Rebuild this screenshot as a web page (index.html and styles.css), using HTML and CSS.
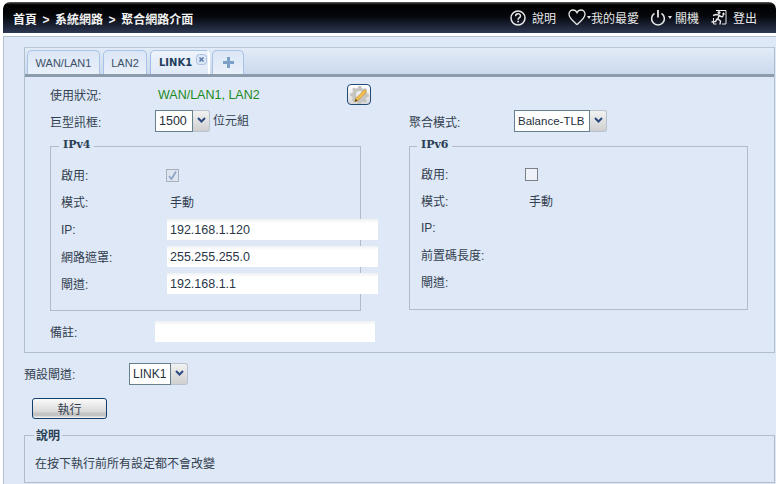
FILE: index.html
```html
<!DOCTYPE html>
<html lang="zh-Hant">
<head>
<meta charset="utf-8">
<title>聚合網路介面</title>
<link rel="stylesheet" href="styles.css">
</head>
<body>
<div class="page">
  <header class="topbar">
    <div class="crumbs">首頁 &gt; 系統網路 &gt; 聚合網路介面</div>
    <nav class="tools">
      <span class="tool t-help">
        <svg class="ic" width="18" height="18" viewBox="0 0 18 18"><circle cx="9" cy="9" r="7" fill="none" stroke="#e8e8e8" stroke-width="1.5"/><path d="M6.6 7.2c0-3.2 4.9-3.2 4.9-.3 0 1.8-2.4 1.8-2.4 3.8" fill="none" stroke="#e8e8e8" stroke-width="1.5"/><rect x="8.3" y="11.7" width="1.6" height="1.7" fill="#e8e8e8"/></svg>
        <span>說明</span>
      </span>
      <span class="tool t-fav">
        <svg class="ic" width="18" height="17" viewBox="0 0 18 17"><path d="M9 15.5C5 12 1 9 1 5.2 1 2.8 2.8 1 5 1c1.700 0 3.200 1 4 2.700C9.800 2 11.300 1 13 1c2.200 0 4 1.800 4 4.200C17 9 13 12 9 15.500z" fill="none" stroke="#e8e8e8" stroke-width="1.300"/></svg>
        <i class="caret"></i>
        <span>我的最愛</span>
      </span>
      <span class="tool t-power">
        <svg class="ic" width="16" height="17" viewBox="0 0 16 17"><path d="M4.500 4.300a6.400 6.400 0 1 0 7 0" fill="none" stroke="#e8e8e8" stroke-width="1.500"/><path d="M8 1v7.500" stroke="#e8e8e8" stroke-width="1.800"/></svg>
        <i class="caret"></i>
        <span>關機</span>
      </span>
      <span class="tool t-exit">
        <svg class="ic" width="17" height="17" viewBox="0 0 17 17"><path d="M6 1.500h10v13.500h-4M3.500 9v6h3" fill="none" stroke="#e8e8e8"/><circle cx="9" cy="3.500" r="1.500" fill="#e8e8e8"/><path d="M3 6.500l3-1 3 .500-1 4 2.500 2-.5 3.500M7.500 9.500l-2 3-4 .500M9 6.500l3 1.500 1.500-1.500" fill="none" stroke="#e8e8e8" stroke-width="1.400"/><path d="M13.500 3.500v3M12 5h3" stroke="#e8e8e8"/></svg>
        <span>登出</span>
      </span>
    </nav>
  </header>

  <main class="content">
    <section class="panel">
      <div class="tabstrip">
        <span class="tab">WAN/LAN1</span>
        <span class="tab tab-lan2">LAN2</span>
        <span class="tab tab-active">LINK1
          <svg class="tab-close" width="11" height="11" viewBox="0 0 11 11"><rect x=".5" y=".5" width="10" height="10" rx="3" fill="#dbe6f6" stroke="#a9c0e0"/><path d="M3.500 3.500l4 4M7.500 3.500l-4 4" stroke="#5f7ca8" stroke-width="1.600"/></svg>
        </span>
        <span class="tab tab-add">
          <svg width="11" height="11" viewBox="0 0 11 11"><path d="M4 0h3v4h4v3H7v4H4V7H0V4h4z" fill="#7c9fc8"/></svg>
        </span>
      </div>

      <div class="panel-body">
        <div class="row row-status">
          <span class="lbl">使用狀況:</span>
          <span class="status">WAN/LAN1, LAN2</span>
          <button class="gear" type="button" aria-label="設定">
            <svg width="19" height="19" viewBox="0 0 18 18"><path d="M8 1h2.500l.5 2 1.800.8 1.700-1 1.700 1.800-1 1.600.8 1.900 1.800.5v2.500l-2 .5-.8 1.800 1 1.700-1.800 1.700-1.700-1-1.800.8-.5 1.800H7.500L7 16l-1.800-.8-1.700 1-1.800-1.800 1-1.700L2 10.900.2 10.400V8l2-.5.7-1.800-1-1.700 1.800-1.700 1.700 1L7.200 3z" fill="#c4c4c0"/><circle cx="9" cy="9" r="3.200" fill="#ecece8"/><path d="M4.500 15.800l.8-2.800 8.500-8.500 2 2-8.500 8.500z" fill="#f2c04a" stroke="#b87c18" stroke-width=".5"/><path d="M4.500 15.800l.8-2.800 2 2z" fill="#6a4a20"/></svg>
          </button>
        </div>

        <div class="row row-jumbo">
          <div class="half half-l">
            <span class="lbl">巨型訊框:</span>
            <span class="combo combo-mtu"><span class="combo-val">1500</span><span class="combo-btn"><svg width="9" height="6" viewBox="0 0 9 6"><path d="M1 1l3.500 3.500L8 1" fill="none" stroke="#2d4a80" stroke-width="2"/></svg></span></span>
            <span class="unit">位元組</span>
          </div>
          <div class="half half-r">
            <span class="lbl lbl-mode">聚合模式:</span>
            <span class="combo combo-mode"><span class="combo-val">Balance-TLB</span><span class="combo-btn"><svg width="9" height="6" viewBox="0 0 9 6"><path d="M1 1l3.500 3.500L8 1" fill="none" stroke="#2d4a80" stroke-width="2"/></svg></span></span>
          </div>
        </div>

        <div class="ipgrid">
          <fieldset class="fs fs-v4">
            <legend>IPv4</legend>
            <div class="frow frow-first"><span class="flbl">啟用:</span><span class="check check-on"><svg width="11" height="11" viewBox="0 0 11 11"><path d="M2 6l2.500 3L9 1.500" fill="none" stroke="#8ea4c8" stroke-width="1.800"/></svg></span></div>
            <div class="frow"><span class="flbl">模式:</span><span class="fval">手動</span></div>
            <div class="frow frow-ip"><span class="flbl">IP:</span><input class="field" value="192.168.1.120"></div>
            <div class="frow"><span class="flbl">網路遮罩:</span><input class="field" value="255.255.255.0"></div>
            <div class="frow"><span class="flbl">閘道:</span><input class="field" value="192.168.1.1"></div>
          </fieldset>
          <fieldset class="fs fs-v6">
            <legend>IPv6</legend>
            <div class="frow frow-first"><span class="flbl">啟用:</span><span class="check"></span></div>
            <div class="frow"><span class="flbl">模式:</span><span class="fval">手動</span></div>
            <div class="frow"><span class="flbl">IP:</span></div>
            <div class="frow"><span class="flbl">前置碼長度:</span></div>
            <div class="frow"><span class="flbl">閘道:</span></div>
          </fieldset>
        </div>

        <div class="row row-note">
          <span class="lbl">備註:</span>
          <input class="field field-note">
        </div>
      </div>
    </section>

    <div class="row row-gw">
      <span class="lbl-gw">預設閘道:</span>
      <span class="combo combo-gw"><span class="combo-val">LINK1</span><span class="combo-btn"><svg width="9" height="6" viewBox="0 0 9 6"><path d="M1 1l3.500 3.500L8 1" fill="none" stroke="#2d4a80" stroke-width="2"/></svg></span></span>
    </div>

    <button class="apply" type="button">執行</button>

    <fieldset class="fs fs-note">
      <legend>說明</legend>
      <p>在按下執行前所有設定都不會改變</p>
    </fieldset>
  </main>
</div>
</body>
</html>
```

FILE: styles.css
```css
* { box-sizing: border-box; }
html, body { margin: 0; height: 100%; }
body {
  background: #fff;
  overflow: hidden;
  font-family: "Liberation Sans", "Noto Sans CJK TC", sans-serif;
  font-size: 12px;
  color: #333f50;
}
.page { padding: 2px 0 0 3px; height: 484px; display: flex; flex-direction: column; }

.topbar {
  height: 31px;
  flex: none;
  display: flex;
  align-items: center;
  justify-content: space-between;
  border-radius: 7px 7px 0 0;
  background: linear-gradient(#6a6a6a 0, #333 1px, #000 3px, #05070c 14px, #2c3752 31px);
  color: #f2f2f2;
}
.crumbs { margin-left: 10px; font-weight: 700; font-size: 12px; padding-top: 1px; word-spacing: 2.200px; }
.tools { display: flex; align-items: center; padding-right: 19px; font-size: 12px; color: #e8e8e8; }
.tool { display: flex; align-items: center; }
.ic { display: block; }
.t-help span { margin-left: 5px; }
.t-fav { margin-left: 12px; }
.t-power { margin-left: 11px; }
.t-exit { margin-left: 11px; }
.t-exit span { margin-left: 6px; }
.caret { width: 0; height: 0; margin: 0 1px 0 2px; border: 2px solid transparent; border-top: 3px solid #e8e8e8; border-bottom: 0; }
.t-fav .caret { margin: 0 0 0 1px; }
.t-power .caret { margin-right: 3px; }

.content {
  margin-top: 3px;
  flex: 1;
  min-height: 0;
  background: #dee8f6;
  border-left: 1px solid #b4c0cc;
  border-top: 1px solid #b4c0cc;
  padding: 10px 0 0 20px;
}

.panel { width: 751px; height: 306px; border: 1px solid #afbfcb; border-top-color: #b8c8d8; }
.tabstrip {
  height: 29px;
  padding: 2px 0 0 2px;
  display: flex;
  gap: 3px;
  align-items: flex-start;
  border-bottom: 3px solid #8c9cac;
  background: linear-gradient(#e2ebf7, #cbdaee);
}
.tab {
  position: relative;
  height: 24px;
  width: 73px;
  flex: none;
  display: flex;
  align-items: center;
  justify-content: center;
  border: 1px solid #a9c2e6;
  border-bottom: 0;
  border-radius: 5px 5px 0 0;
  background: linear-gradient(#dbe6f6, #e9f0fa);
  color: #3d5068;
  font-size: 11px;
}
.tab-lan2 { width: 44px; }
.tab-active {
  width: 60px;
  justify-content: flex-start;
  padding-left: 8px;
  background: linear-gradient(#edf3fb, #dfe9f7);
  border-right: 2px solid #fff;
  border-left-color: #9fbbe2;
  font-family: "DejaVu Sans", sans-serif;
  font-weight: 700;
  font-size: 10px;
  color: #1f3d5c;
}
.tab-close { position: absolute; top: 3px; right: 1px; }
.tab-add { width: 32px; margin-left: -1px; }

.panel-body { padding: 0 0 0 25px; }
.row { display: flex; align-items: center; }
.lbl { width: 105px; flex: none; }
.row-status { height: 34px; }
.status { width: 189px; margin-left: 3px; padding-top: 2px; color: #1d8a1d; font-size: 12.500px; }
.gear {
  width: 24px; height: 21px; padding: 0;
  display: flex; align-items: center; justify-content: center;
  border: 1px solid #1f4a78; border-radius: 4px;
  background: linear-gradient(#fff, #d8d8d8);
}
.row-jumbo { height: 22px; margin-top: -1px; }
.half { display: flex; align-items: center; }
.half-l { width: 359px; }
.lbl-mode { width: 105px; }

.combo { display: flex; height: 22px; flex: none; }
.combo-val {
  display: block;
  height: 22px;
  line-height: 21px;
  padding-left: 3px;
  background: #fff;
  border: 1px solid #66808e;
  font-size: 12.500px;
  color: #1f3040;
  white-space: nowrap;
}
.combo-btn {
  width: 17px;
  height: 22px;
  display: flex;
  justify-content: center;
  padding-top: 6px;
  border: 1px solid #b8c2cc;
  border-left: 0;
  border-radius: 0 3px 3px 0;
  background: linear-gradient(#f2f2f2, #cfcfcf);
}
.combo-mtu .combo-val { width: 38px; }
.combo-mode .combo-val { width: 76px; font-size: 11.500px; }
.combo-gw .combo-val { width: 42px; font-size: 12px; }
.unit { margin-left: 3px; margin-top: -3px; }

.ipgrid { display: flex; margin-top: 6px; align-items: flex-start; }
.fs {
  margin: 0;
  padding: 0;
  border: 1px solid #b3bac8;
  min-width: 0;
}
.fs legend {
  padding: 0 4px 2px;
  font-family: "DejaVu Serif", "Noto Sans CJK TC", serif;
  font-weight: 700;
  font-size: 11px;
  line-height: 14px;
  color: #2a3f55;
}
.fs-v4 { width: 311px; height: 173px; padding: 6px 0 0 10px; }
.fs-v4 legend { margin-left: -2px; }
.fs-v6 { width: 339px; height: 172px; margin-left: 48px; padding: 5px 0 0 11px; }
.fs-v6 legend { margin-left: -4px; }
.frow { display: flex; align-items: center; height: 27px; }
.frow-first { height: 28px; }
.frow-ip { margin-top: 1px; }
.flbl { width: 106px; flex: none; }
.fs-v6 .flbl { width: 105px; }
.fval { margin-left: 3px; }
.check {
  width: 13px; height: 13px;
  display: block;
  margin: 3px 0 0 -1px;
  background: #eef2f8;
  border: 1px solid #7a8088;
}
.check-on { border-color: #a8b0bc; background: #dfe5f0; }
.check-on svg { display: block; }
.field {
  display: block;
  flex: none;
  width: 211px;
  height: 21px;
  border: 0;
  padding: 1px 0 0 3px;
  outline: none;
  background: linear-gradient(#eef0f2 0, #fff 4px);
  font-family: "Liberation Sans", sans-serif;
  font-size: 12.500px;
  color: #2a3646;
}
.row-note { margin-top: 10px; }
.field-note { width: 220px; }

.row-gw { margin-top: 10px; height: 22px; }
.lbl-gw { width: 105px; margin-top: -1px; }
.apply {
  display: block;
  width: 75px;
  height: 21px;
  margin: 13px 0 0 8px;
  padding: 0 0 1px;
  border: 1px solid #12406e;
  border-radius: 3px;
  background: linear-gradient(#fafafa 0, #d8d8d8 13px, #c4c4c4 14px, #c4c4c4 17px, #eee 18px);
  font-family: inherit;
  font-size: 12px;
  color: #333f50;
}
.fs-note { width: 751px; height: 55px; margin-top: 9px; padding: 0; }
.fs-note legend { margin-left: 9px; font-family: "Noto Sans CJK TC", sans-serif; padding: 0 2px; font-size: 12px; }
.fs-note p { margin: 0; padding: 12px 0 0 10px; }
```
